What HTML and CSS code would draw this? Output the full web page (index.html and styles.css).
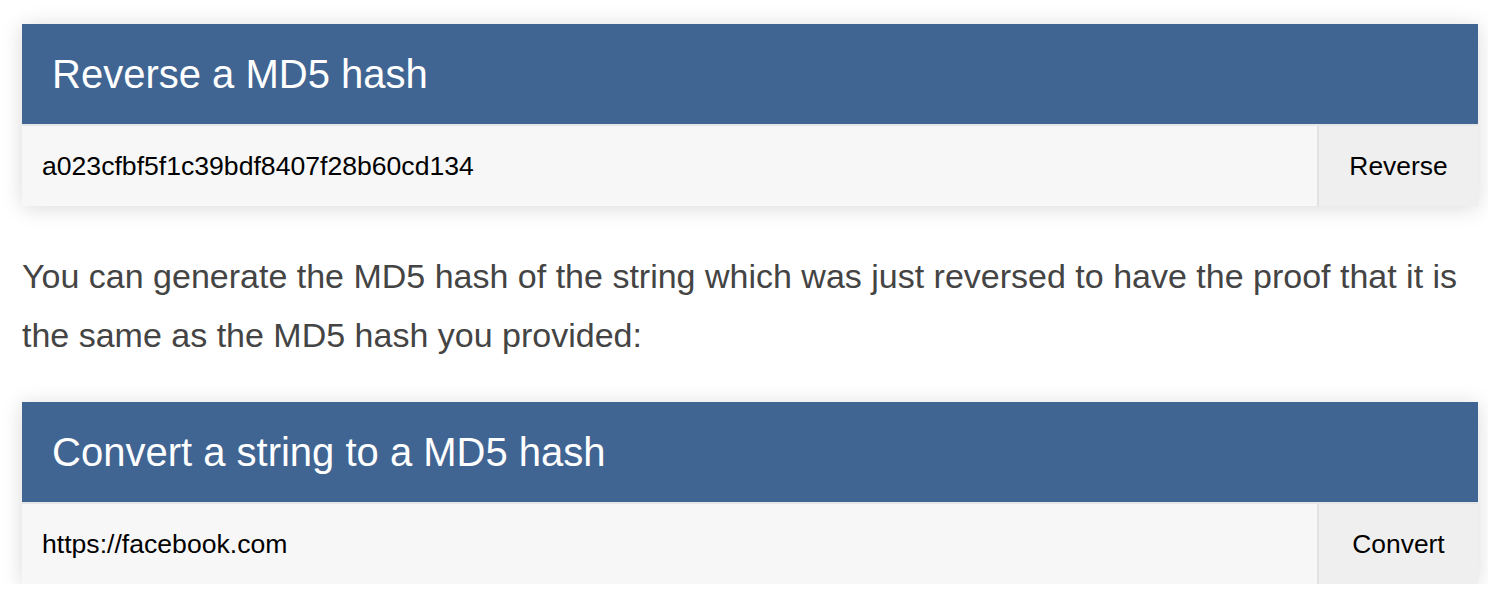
FILE: index.html
```html
<!DOCTYPE html>
<html>
<head>
<meta charset="utf-8">
<link rel="stylesheet" href="styles.css">
</head>
<body>
<main class="page">
  <section class="card">
    <h2 class="card-title">Reverse a MD5 hash</h2>
    <form class="field-row">
      <input class="field-input" type="text" value="a023cfbf5f1c39bdf8407f28b60cd134">
      <button class="field-btn" type="button">Reverse</button>
    </form>
  </section>
  <p class="note">You can generate the MD5 hash of the string which was just reversed to have the proof that it is the same as the MD5 hash you provided:</p>
  <section class="card">
    <h2 class="card-title">Convert a string to a MD5 hash</h2>
    <form class="field-row">
      <input class="field-input" type="text" value="https://facebook.com">
      <button class="field-btn" type="button">Convert</button>
    </form>
  </section>
</main>
</body>
</html>
```
FILE: styles.css
```css
html, body {
  margin: 0;
  padding: 0;
  background: #ffffff;
}
body {
  font-family: "Liberation Sans", Arial, sans-serif;
}
.page {
  width: 1456px;
  padding: 24px 0 0 22px;
}
.card {
  background: #f7f7f7;
  box-shadow: 0 2px 20px rgba(0, 0, 0, 0.15);
}
.card-title {
  margin: 0;
  height: 100px;
  display: flex;
  align-items: center;
  padding-left: 30px;
  background: #406593;
  color: #ffffff;
  font-size: 40px;
  font-weight: normal;
}
.field-row {
  display: flex;
  margin: 0;
  height: 80px;
  border-top: 2px solid #e6e6e6;
}
.field-input {
  flex: 1;
  min-width: 0;
  border: 0;
  outline: none;
  margin: 0;
  padding: 0 0 0 20px;
  background: #f7f7f7;
  color: #000;
  font-family: "Liberation Sans", Arial, sans-serif;
  font-size: 26.6px;
}
.field-btn {
  width: 161px;
  margin: 0;
  border: 0;
  border-left: 2px solid #e2e2e2;
  background: #efefef;
  color: #000;
  font-family: "Liberation Sans", Arial, sans-serif;
  font-size: 26.4px;
  padding: 0;
}
.note {
  margin: 41px 0 37px;
  color: #444444;
  font-size: 34px;
  line-height: 59px;
}
```
